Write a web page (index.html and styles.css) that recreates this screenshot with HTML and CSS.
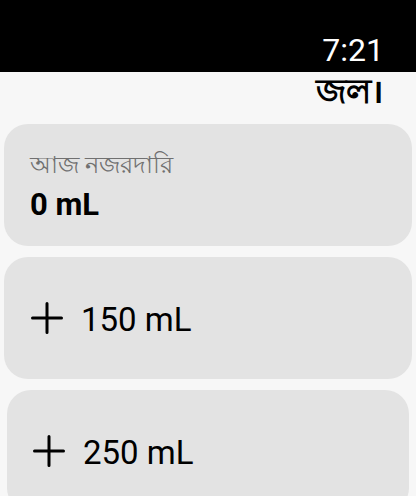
FILE: index.html
```html
<!DOCTYPE html>
<html lang="bn">
<head>
<meta charset="utf-8">
<link rel="stylesheet" href="styles.css">
</head>
<body>
<div class="status"><span class="time">7:21</span></div>
<div class="title">জল।</div>
<div class="list">
  <div class="card summary">
    <div class="label">আজ নজরদারি</div>
    <div class="amount">0 mL</div>
  </div>
  <div class="card action">
    <svg class="plus" width="32" height="32" viewBox="0 0 32 32"><path d="M16 1.5V30.5M1.5 16H30.5" stroke="#000" stroke-width="3" stroke-linecap="round" fill="none"/></svg>
    <span class="value">150 mL</span>
  </div>
  <div class="card action third">
    <svg class="plus" width="32" height="32" viewBox="0 0 32 32"><path d="M16 1.5V30.5M1.5 16H30.5" stroke="#000" stroke-width="3" stroke-linecap="round" fill="none"/></svg>
    <span class="value">250 mL</span>
  </div>
</div>
</body>
</html>
```
FILE: styles.css
```css
html, body {
  margin: 0;
  padding: 0;
  background: #f7f7f7;
  font-family: Roboto, "Noto Sans", sans-serif;
  overflow: hidden;
  height: 496px;
}
.status {
  height: 72px;
  background: #000;
  display: flex;
  justify-content: flex-end;
  align-items: flex-end;
  padding-right: 32px;
  box-sizing: border-box;
}
.time {
  color: #fff;
  font-size: 32px;
  line-height: 32px;
  padding-bottom: 6px;
}
.title {
  text-align: right;
  padding-right: 32px;
  font-size: 34px;
  font-weight: 600;
  line-height: 36px;
  color: #000;
  height: 52px;
  padding-top: 1px;
  box-sizing: border-box;
}
.list {
  display: flex;
  flex-direction: column;
  gap: 11px;
  padding: 0 4px;
}
.card {
  background: #e3e3e3;
  border-radius: 24px;
  height: 122px;
  box-sizing: border-box;
  flex-shrink: 0;
}
.summary {
  padding: 25px 26px 0;
}
.label {
  color: #707070;
  font-size: 24px;
  line-height: 32px;
}
.amount {
  font-weight: 700;
  font-size: 31px;
  line-height: 34px;
  margin-top: 7px;
}
.action {
  display: flex;
  align-items: center;
  padding-left: 27px;
  gap: 18px;
}
.third {
  margin: 0 3px;
  padding-left: 26px;
}
.value {
  font-size: 33px;
  color: #000;
  padding-top: 2px;
}
.plus { display: block; }
```
